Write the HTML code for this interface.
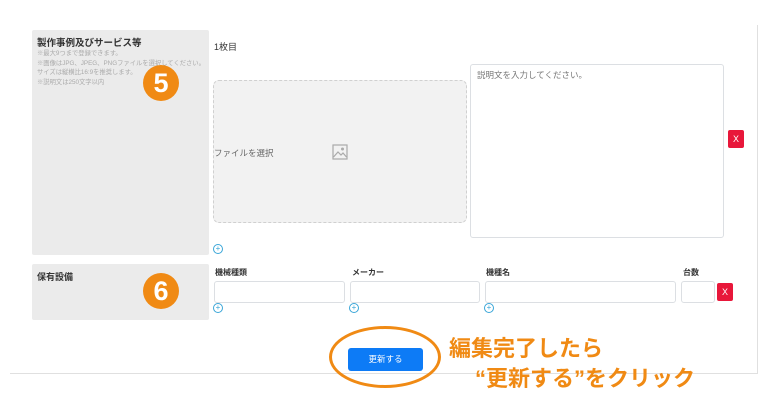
<!DOCTYPE html><html><head><meta charset="utf-8"><style>
body{margin:0;width:770px;height:400px;background:#fff;position:relative;overflow:hidden;font-family:"Liberation Sans","Noto Sans CJK JP",sans-serif;}
.a{position:absolute}
.g{background:#ebebeb;border-radius:2px}
.in{position:absolute;border:1px solid #dcdfe3;border-radius:3px;background:#fff;box-sizing:border-box}
.x{position:absolute;background:#e8173a;color:#fff;font-size:9px;text-align:center;border-radius:2px;width:16px;height:18px;line-height:18px}
.p{position:absolute;width:8px;height:8px;border:1px solid #3aa6d8;border-radius:50%;color:#3aa6d8;font-size:8px;line-height:8px;text-align:center}
.lb{position:absolute;font-size:8px;font-weight:bold;color:#333}
.c{position:absolute;width:36px;height:36px;border-radius:50%;background:#f08a14;color:#fff;font-weight:bold;font-size:27px;text-align:center;line-height:36px}
.o{position:absolute;color:#f08a14;font-weight:bold;font-size:22px;white-space:nowrap}
</style></head><body>
<div class="a" style="left:757px;top:25px;width:1px;height:349px;background:#e0e0e0"></div>
<div class="a" style="left:10px;top:373px;width:748px;height:1px;background:#e0e0e0"></div>
<div class="a g" style="left:32px;top:30px;width:177px;height:225px"></div>
<div class="a" style="left:37px;top:35px;font-size:9.5px;font-weight:bold;color:#333">製作事例及びサービス等</div>
<div class="a" style="left:37px;top:49px;font-size:6.3px;color:#aaa;line-height:9.5px">※最大9つまで登録できます。<br>※画像はJPG、JPEG、PNGファイルを選択してください。<br>サイズは縦横比16:9を推奨します。<br>※説明文は250文字以内</div>
<div class="c" style="left:143px;top:65px">5</div>
<div class="a" style="left:214px;top:40px;font-size:9px;color:#333">1枚目</div>
<div class="a" style="left:213px;top:80px;width:254px;height:143px;border:1px dashed #d0d0d0;border-radius:6px;background:#f2f2f2;box-sizing:border-box"></div>
<div class="a" style="left:214px;top:147px;font-size:8.5px;color:#666">ファイルを選択</div>
<svg class="a" style="left:332px;top:144px" width="16" height="16" viewBox="0 0 16 16"><rect x="1" y="1" width="14" height="14" fill="none" stroke="#aaa" stroke-width="1.2"/><circle cx="10.5" cy="5" r="1.5" fill="#aaa"/><path d="M1.5 13l4.5-5 3 3 2-2 3.5 4" fill="none" stroke="#aaa" stroke-width="1.2"/></svg>
<div class="in" style="left:470px;top:64px;width:254px;height:174px"></div>
<div class="a" style="left:477px;top:69px;font-size:8.5px;color:#777">説明文を入力してください。</div>
<div class="x" style="left:728px;top:130px">X</div>
<div class="p" style="left:213px;top:244px">+</div>
<div class="a g" style="left:32px;top:264px;width:177px;height:56px"></div>
<div class="a" style="left:37px;top:270px;font-size:9px;font-weight:bold;color:#333">保有設備</div>
<div class="c" style="left:143px;top:273px">6</div>
<div class="lb" style="left:215px;top:267px">機械種類</div>
<div class="lb" style="left:352px;top:267px">メーカー</div>
<div class="lb" style="left:486px;top:267px">機種名</div>
<div class="lb" style="left:683px;top:267px">台数</div>
<div class="in" style="left:214px;top:281px;width:131px;height:22px"></div>
<div class="in" style="left:350px;top:281px;width:130px;height:22px"></div>
<div class="in" style="left:485px;top:281px;width:191px;height:22px"></div>
<div class="in" style="left:681px;top:281px;width:34px;height:22px"></div>
<div class="x" style="left:717px;top:283px">X</div>
<div class="p" style="left:213px;top:303px">+</div>
<div class="p" style="left:349px;top:303px">+</div>
<div class="p" style="left:484px;top:303px">+</div>
<div class="a" style="left:348px;top:348px;width:75px;height:23px;background:#0d7bf6;border-radius:3px;color:#fff;font-size:8.5px;text-align:center;line-height:23px">更新する</div>
<div class="a" style="left:329px;top:326px;width:112px;height:62px;border:3px solid #f08a14;border-radius:50%;box-sizing:border-box"></div>
<div class="o" style="left:449px;top:331px">編集完了したら</div>
<div class="o" style="left:475px;top:361px">“更新する”をクリック</div>
</body></html>
